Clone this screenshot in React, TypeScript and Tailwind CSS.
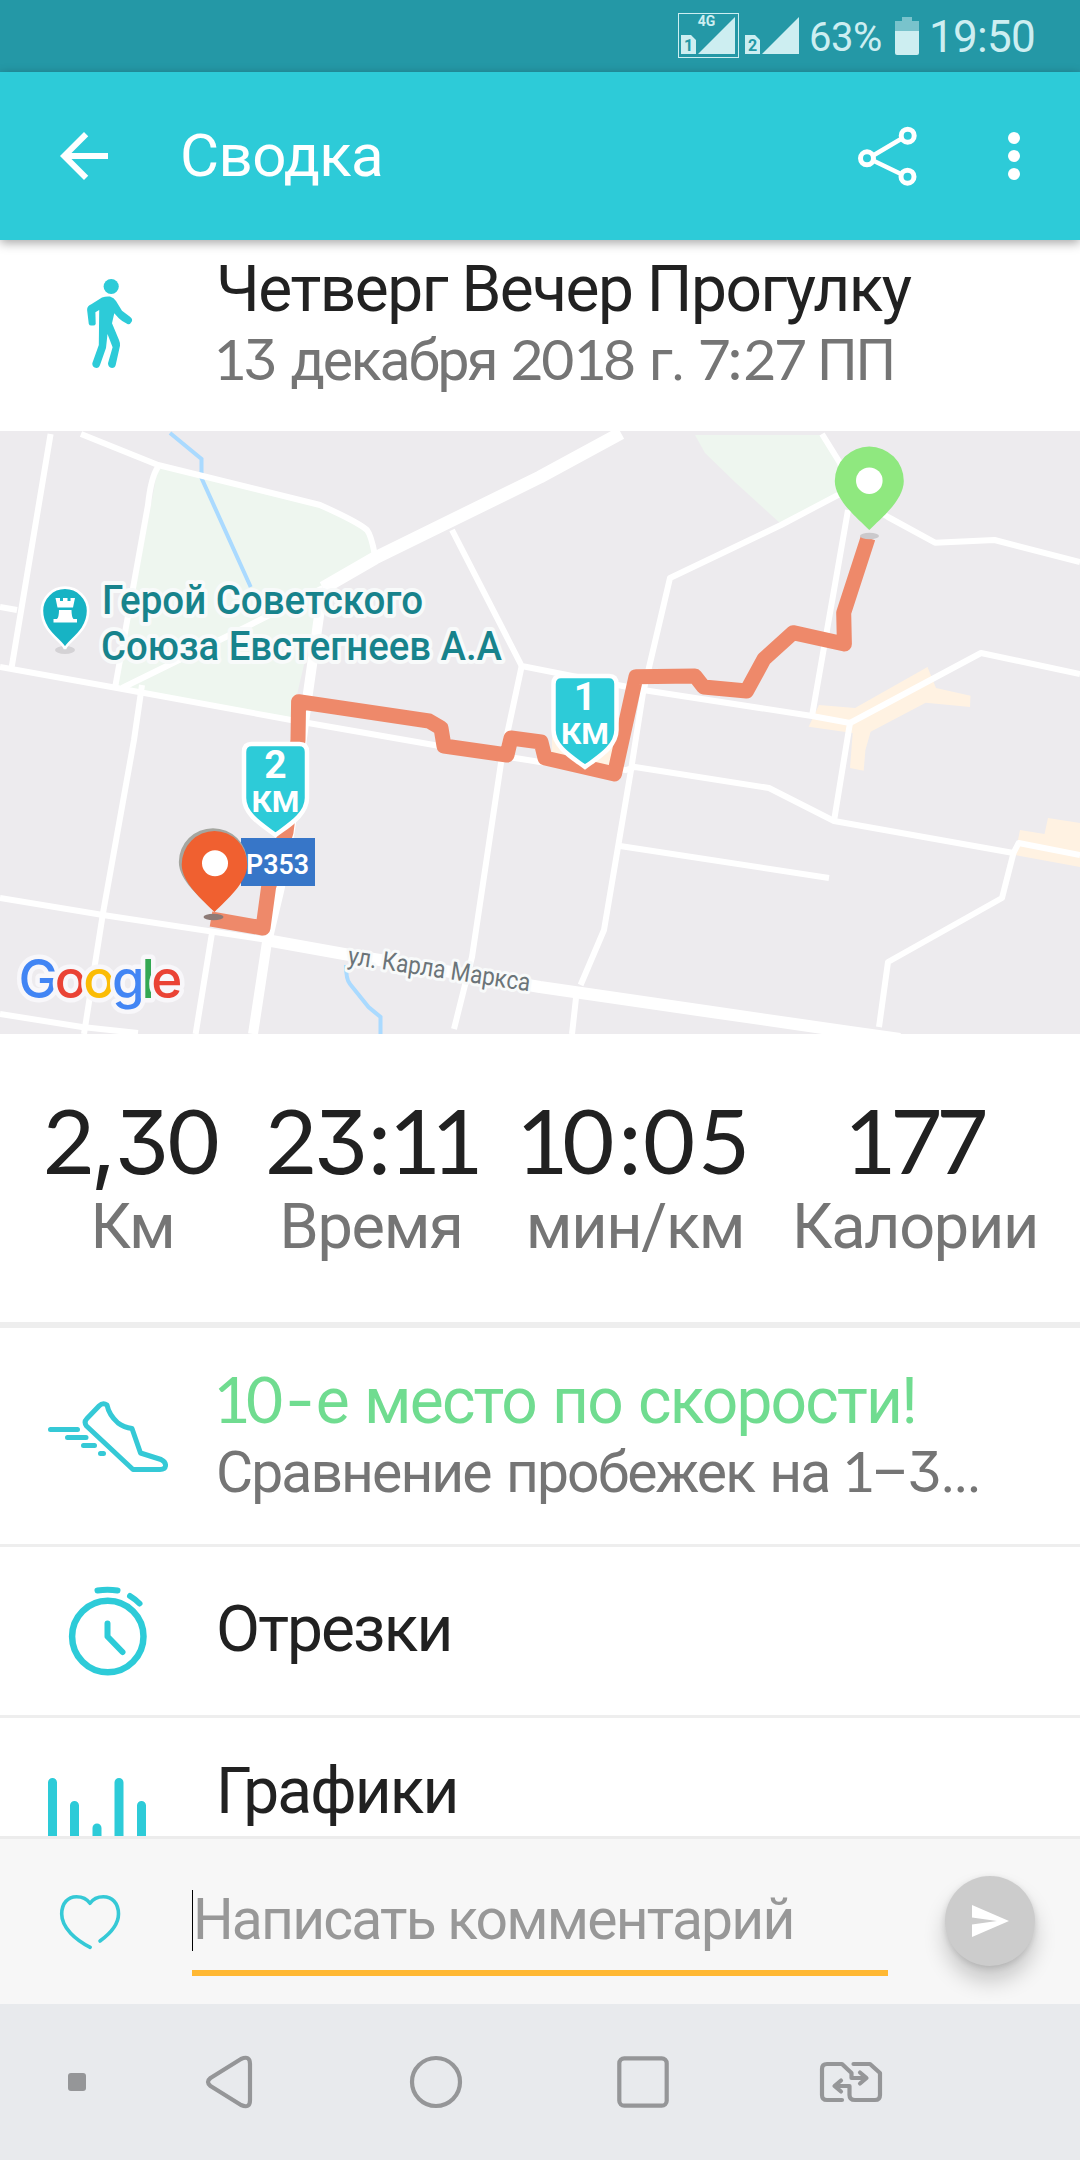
import React from 'react';

interface MixedTextProps {
  text: string;
}

// Digits and some punctuation use a different, tighter face than the Cyrillic letters
const GLYPHS: Record<string, string> = {
  '1': 'font-[Lato] ml-[-0.04em] tracking-[-0.07em]',
  '2': 'font-[Lato] tracking-[-0.04em]',
  '3': "font-[Inter] text-[0.98em] tracking-[-0.02em] [font-feature-settings:'cv09']",
  '0': 'font-[Lato] tracking-[0.03em]',
  '5': 'font-[Lato] tracking-[0em]',
  '7': 'font-[Lato] tracking-[-0.07em]',
  '8': 'font-[Lato] tracking-[-0.02em]',
  ',': 'font-[Inter] ml-[-0.01em] tracking-[-0.02em]',
  ':': 'font-[Inter] tracking-[0em]',
  '-': 'font-[Inter] tracking-[0.02em]',
};

const MixedText: React.FC<MixedTextProps> = ({ text }) => (
  <>
    {text.split(/([\d,:-])/).map((part, i) =>
      GLYPHS[part] ? (
        <span key={i} className={`leading-none ${GLYPHS[part]}`}>
          {part}
        </span>
      ) : (
        <React.Fragment key={i}>{part}</React.Fragment>
      )
    )}
  </>
);

const StatusBar: React.FC = () => (
  <div className="flex h-[72px] shrink-0 items-center bg-[#2498a6] pl-[677px] text-[#cdeef1]">
    <svg width="124" height="72" viewBox="677 0 124 72" className="shrink-0" fill="#cdeef1">
      <rect x="678.5" y="13.5" width="60" height="44" fill="none" stroke="#cdeef1" />
      <text x="706.5" y="26" textAnchor="middle" fontFamily="Roboto" fontWeight="700" fontSize="14">4G</text>
      <path d="M681 35h10l5 5v14h-15zM735 17v37h-37z" />
      <path d="M745 35h10l5 5v14h-15zM799 17v37h-37z" />
      <g fill="#2498a6" fontFamily="Roboto" fontWeight="700" fontSize="16" textAnchor="middle">
        <text x="688.5" y="51">1</text>
        <text x="752.5" y="51">2</text>
      </g>
    </svg>
    <span className="ml-[8px] w-[76px] pt-[3px] text-[40px] tracking-[-0.5px]">63%</span>
    <svg width="24" height="38" viewBox="0 0 24 38" className="ml-[10px]" fill="#cdeef1">
      <path d="M7 0h10v4h7v10H0V4h7z" opacity="0.5" />
      <path d="M0 14h24v22q0 2-2 2H2q-2 0-2-2z" />
    </svg>
    <span className="ml-[10px] pt-[3px] text-[44px] leading-[69px] tracking-[-0.7px]">19:50</span>
  </div>
);

const AppBar: React.FC = () => (
  <header className="relative z-10 flex h-[168px] shrink-0 items-center bg-[#2dcbd8] pl-[48px] text-white shadow-[0_3px_10px_rgba(0,0,0,0.35)]">
    <svg width="72" height="72" viewBox="0 0 24 24" fill="currentColor">
      <path d="M20 11H7.83l5.59-5.59L12 4l-8 8 8 8 1.41-1.41L7.83 13H20z" />
    </svg>
    <h1 className="ml-[60px] w-[660px] text-[60px] leading-[72px] tracking-[-0.6px]">Сводка</h1>
    <svg width="72" height="72" viewBox="852 120 72 72" className="ml-[12px]" fill="none" stroke="currentColor">
      <path d="M874 155L901 139M874 161L901 174" strokeWidth="4.5" />
      <g strokeWidth="5">
        <circle cx="907.7" cy="135.7" r="6.5" />
        <circle cx="867" cy="158.3" r="6.5" />
        <circle cx="907.5" cy="176.7" r="6.5" />
      </g>
    </svg>
    <svg width="12" height="48" viewBox="0 0 12 48" className="ml-[84px]" fill="currentColor">
      <circle cx="6" cy="6" r="6" />
      <circle cx="6" cy="24" r="6" />
      <circle cx="6" cy="42" r="6" />
    </svg>
  </header>
);

const PIN = 'M0 0C-12 -12 -34.5 -30 -34.5 -49A34.5 34.5 0 0 1 34.5 -49C34.5 -30 12 -12 0 0Z';

const KmMarker: React.FC<{ x: number; y: number; km: string }> = ({ x, y, km }) => (
  <g transform={`translate(${x} ${y})`} fontFamily="Roboto" fill="#fff" textAnchor="middle">
    <path
      d="M-24 2H24Q31.5 2 31.5 10V56C31.5 73 12 84 0 93C-12 84 -31.5 73 -31.5 56V10Q-31.5 2 -24 2Z"
      fill="#2dcbd8"
      stroke="#fff"
      strokeWidth="4.5"
    />
    <text y="36" fontSize="39" fontWeight="700">{km}</text>
    <text y="70" fontSize="30" fontWeight="700" textLength="48" lengthAdjust="spacingAndGlyphs">КМ</text>
  </g>
);

const RouteMap: React.FC = () => (
  <svg width="1080" height="603" viewBox="0 431 1080 603" className="block shrink-0 bg-[#edebee]">
    {/* Parks */}
    <g fill="#eef6ef">
      <path d="M158 467L320 505L367 530L375 556L322 588L291 720L117 688Z" />
      <path d="M695 435H822L840 463L836 495L781 524L736 483L705 453Z" />
    </g>
    {/* Built-up areas */}
    <g fill="#fff2e2">
      <path d="M819 705L855 708L927.5 667L936 688L970.5 695.7L970 707L925.7 702.7L870.6 731.7L865.4 750L863.7 770.7L850 768L852.7 733L808.6 726.7Z" />
      <path d="M1020 830L1044.5 834L1048 818L1080 823V867L1015 855Z" />
      <path d="M552 725H632L612 767L552 753Z" />
    </g>
    {/* Water */}
    <g fill="none" stroke="#aadaff" strokeWidth="4">
      <path d="M170 433L201.5 459V478L250.7 587" />
      <path d="M346 965Q346 980 350 984L368.5 1007L380.5 1017V1034" />
    </g>
    {/* Streets */}
    <g fill="none" stroke="#fff" strokeWidth="6" strokeLinejoin="round">
      <path d="M50.6 434L11.7 667M0 607L17 610" />
      <path d="M81 434L158 465L320 505Q358 522 367 530Q371 535 374.7 554" />
      <path d="M158 467Q151 477 148 505L115 688" />
      <path d="M323 588L248 626L179 660L122 688" />
      <path d="M0 667L117 688L291 720L434 745L540 762L626 770L635 767L769 788L834 821L1013.5 853L1018.6 843L1080 855" />
      <path d="M142 685L134 740L103 913L84 1034" />
      <path d="M452 530L521.7 666L643 690L812 716L850 723L981 653L1080 674" />
      <path d="M521.7 666L508 730L501 763L472 957L454 1029" />
      <path d="M822 434L840 463L848 490L838 495L781 525L670 578L643 693L631 770L604 930L580.6 985M576 998L572 1034" />
      <path d="M848 510L812 716M860 500L888 517L935 542.7L994.5 540L1080 562" />
      <path d="M850 723L848 735L834 821M620 846L829 878" />
      <path d="M1013.5 853L1002 898L888 962L879 1027" />
      <path d="M0 898L103 915L268 940M212 933L195.6 1034M0 1014L82 1027L138 1033" />
      <path d="M323 588L375 558L540 477L621 433" strokeWidth="13" />
      <path d="M323 588L307 700L290 830L280 887L267 942L253 1034" strokeWidth="10" />
      <path d="M266 940L344 954L540 987L712 1012L850 1032L900 1039" strokeWidth="12" />
    </g>
    {/* Tracked route */}
    <path
      d="M868 538L843.7 612.7L844.4 644L793 632.7L764 659L746.6 691L703.6 687L695 676L636 676.7L614.5 774L545 758L541 742L511 738L507 755L444 746L441 728L429 721L298.6 701.7L298 740L286 832L268.6 887L263 928L211 919"
      fill="none"
      stroke="#ee896a"
      strokeWidth="15"
      strokeLinejoin="round"
    />
    {/* Landmark */}
    <ellipse cx="65" cy="650" rx="10" ry="4" fill="#d4d2d5" />
    <path d="M0 0C-3 -12 -34.5 -25 -34.5 -57A34.5 34.5 0 0 1 34.5 -57C34.5 -25 3 -12 0 0Z" transform="translate(65 649) scale(0.67)" fill="#17b3c4" stroke="#fff" strokeWidth="4" />
    <path d="M55.5 598h4.5v3h3v-3h4.5v3h3v-3h4.5l-2 9.5h-15.5zM59 610h12.5q0 7 2 9h3.5v3.5h-23.5v-3.5h3.5q2-2 2-9z" fill="#fff" />
    <g fontFamily="Roboto" paintOrder="stroke" stroke="#f8fafa" strokeWidth="8" strokeLinejoin="round">
      <g fill="#17838c" fontSize="41" fontWeight="500">
        <text x="102" y="614" textLength="321" lengthAdjust="spacingAndGlyphs">Герой Советского</text>
        <text x="101" y="660" textLength="401" lengthAdjust="spacingAndGlyphs">Союза Евстегнеев А.А</text>
      </g>
      <text transform="translate(347 964) rotate(8.5)" fontSize="25.5" fill="#6b7478" textLength="184" strokeWidth="6" lengthAdjust="spacingAndGlyphs">
        ул. Карла Маркса
      </text>
    </g>
    {/* Markers */}
    <KmMarker x={585} y={674} km="1" />
    <KmMarker x={275.5} y={742} km="2" />
    <rect x="241" y="838" width="74" height="48" fill="#3776c8" />
    <text x="246" y="873.5" fontFamily="Roboto" fontWeight="600" fontSize="28.5" fill="#fff" textLength="63" lengthAdjust="spacingAndGlyphs">P353</text>
    <ellipse cx="213.5" cy="917" rx="10" ry="3.3" fill="#8d7a76" />
    <path d={PIN} transform="translate(213 910) scale(0.99 0.98)" fill="#a5a6a0" />
    <path d={PIN} transform="translate(214.5 912) scale(0.95 0.97)" fill="#f06030" />
    <circle cx="215" cy="863.3" r="13" fill="#fff" />
    <ellipse cx="869.5" cy="536" rx="9.5" ry="3.3" fill="#cbc9cc" />
    <path d={PIN} transform="translate(869.3 530)" fill="#8fe87f" />
    <circle cx="869.3" cy="480.7" r="13.3" fill="#fff" />
    {/* Attribution */}
    <text x="18.5" y="998" fontFamily="Inter" fontWeight="500" fontSize="53" textLength="164" paintOrder="stroke" stroke="#f8f7fa" strokeWidth="9" strokeLinejoin="round">
      <tspan fill="#4285f4">G</tspan>
      <tspan fill="#ea4335">o</tspan>
      <tspan fill="#fbbc05">o</tspan>
      <tspan fill="#4285f4">g</tspan>
      <tspan fill="#34a853">l</tspan>
      <tspan fill="#ea4335">e</tspan>
    </text>
  </svg>
);

const stats = [
  { value: '2,30', label: 'Км', width: 'w-[173px]' },
  { value: '23:11', label: 'Время', width: 'w-[208px]' },
  { value: '10:05', label: 'мин/км', width: 'w-[224px]' },
  { value: '177', label: 'Калории', width: 'w-[240px]' },
];

const Stats: React.FC = () => (
  <section className="flex h-[294px] shrink-0 gap-[48px] border-b-[6px] border-[#eeeeee] pt-[60px] pl-[46px]">
    {stats.map((s) => (
      <div key={s.label} className={`flex flex-col items-center whitespace-nowrap ${s.width}`}>
        <span className="h-[96px] text-[90px] leading-[100px] text-[#212121]">
          <MixedText text={s.value} />
        </span>
        <span className="text-[63px] leading-[74px] tracking-[-1.3px] text-[#757575]">{s.label}</span>
      </div>
    ))}
  </section>
);

const WalkIcon: React.FC = () => (
  <svg width="120" height="120" viewBox="0 0 120 120" className="mt-[30px]" fill="#2dcbd8">
    <circle cx="63.2" cy="16.5" r="7.6" />
    <path d="M43.3 34.3L54 27.5Q58 26 62 26.5Q66 27.5 68 31L74 40.7L82 46.7Q85 49 83.8 51.5Q82 55 79.4 54Q74 51.5 70.8 48.3L66.3 43.3L64 53.3L71 70Q72.3 73 72 75.7L67.7 95Q67 98 64 98Q60 97.5 60 93.3L64.6 77.3L59.5 64L58 78L52 95Q51 98 48.5 98Q44 97.5 44.3 93.3L50.8 75L51.2 40L47.4 42.3L47.7 54Q47 56 44.2 55.5Q41.5 56 40.8 54L39.1 40Q39 36 43.3 34.3Z" />
  </svg>
);

const ShoeIcon: React.FC = () => (
  <svg width="120" height="120" viewBox="0 0 120 120" className="mt-[48px]" fill="none" stroke="#35c9d6" strokeWidth="5" strokeLinecap="round" strokeLinejoin="round">
    <path d="M2.5 53.5H29.5M19.5 61.5H38M35.5 69.5H46.5M52.5 77.5H55.5" />
    <path d="M38.5 50Q35.5 46 39 42.5L51 30Q55 26 59 29Q61 39 70 47Q76 51.5 84 52.5L92.5 77L113 83.5Q118 86 117.5 90Q117 93.5 112 93.5H85Z" />
  </svg>
);

const StopwatchIcon: React.FC = () => (
  <svg width="120" height="120" viewBox="0 0 120 120" className="mt-[24px]" fill="none" stroke="#2dcbd8" strokeWidth="6.5" strokeLinecap="round" strokeLinejoin="round">
    <circle cx="59.8" cy="65.5" r="35.7" />
    <path d="M49.5 19.5Q59.5 18 69.5 19.5M82 25Q87 28 91.5 32.5M59.5 52.5V65.5L74.5 81" strokeWidth="6" />
  </svg>
);

const ChartIcon: React.FC = () => (
  <svg width="120" height="120" viewBox="0 0 120 120" className="mt-[60px]" stroke="#2dcbd8" strokeWidth="9" strokeLinecap="round">
    <path d="M4.5 4.5V100M26.5 27.5V100M49 50V100M71 4.5V100M93.5 27.5V100" />
  </svg>
);

const CommentBar: React.FC = () => (
  <div className="flex h-[168px] shrink-0 items-start overflow-hidden border-t-[3px] border-[#ececec] bg-[#f7f7f7] pl-[54px]">
    <svg width="72" height="72" viewBox="0 0 72 72" className="mt-[46px]" fill="none" stroke="#35c9d6" strokeWidth="3.6" strokeLinecap="round" strokeLinejoin="round">
      <path d="M36.2 62.3C22 55 7.7 43 7.7 29C7.7 18 14 11.7 22.5 11.7C29 11.7 33 14 36 18.3C39 14 43 11.7 49.3 11.7C58 11.7 64.5 18 64.5 29C64.5 39 57 48 46 56" />
    </svg>
    <div className="mt-[51px] ml-[66px] flex h-[86px] w-[696px] items-start border-b-[6px] border-[#ffb833]">
      <span className="h-[61px] w-px bg-black" />
      <span className="text-[57px] leading-[60px] tracking-[-1.8px] whitespace-nowrap text-[#989898]">Написать комментарий</span>
    </div>
    <button className="mt-[37px] ml-[57px] flex h-[90px] w-[90px] items-center justify-center rounded-full bg-[#cccccc] shadow-[0_15px_22px_rgba(0,0,0,0.2),0_2px_6px_rgba(0,0,0,0.12)]">
      <svg width="38" height="34" viewBox="0 0 38 34" fill="#fff">
        <path d="M1 1L38 17L1 33V20.5L26 17L1 13.5Z" />
      </svg>
    </button>
  </div>
);

const NavBar: React.FC = () => (
  <nav className="flex h-[156px] shrink-0 items-center bg-[#e8eaed] pl-[68px]">
    <span className="h-[18px] w-[18px] rounded-[3px] bg-[#959698]" />
    <svg width="60" height="60" viewBox="0 0 60 60" className="ml-[114px]" fill="none" stroke="#959698" strokeWidth="4.2" strokeLinejoin="round">
      <path d="M10.5 26L41 7Q50 3 50 12V48Q50 57 41 53L10.5 34Q5.5 30 10.5 26Z" />
    </svg>
    <svg width="60" height="60" viewBox="0 0 60 60" className="ml-[146px]" fill="none" stroke="#959698" strokeWidth="4.2">
      <circle cx="30" cy="30" r="24" />
    </svg>
    <svg width="60" height="60" viewBox="0 0 60 60" className="ml-[147px]" fill="none" stroke="#959698" strokeWidth="4.2">
      <rect x="6.3" y="6.3" width="47.4" height="47.4" rx="5" />
    </svg>
    <svg width="68" height="60" viewBox="0 0 68 60" className="ml-[144px]" fill="none" stroke="#959698" strokeWidth="4.2" strokeLinecap="round" strokeLinejoin="round">
      <path d="M25 48H10Q5 48 5 43V17Q5 12 10 12H25L34.5 21V26H49M43 20.5L49.5 26L43 31.5" />
      <path d="M36.5 12H53L63 21V43Q63 48 58 48H38Q32.5 48 32.5 43V34H18M24 28.5L17.5 34L24 39.5" />
    </svg>
  </nav>
);

export default function App() {
  return (
    <div className="flex h-[2160px] w-[1080px] flex-col overflow-hidden bg-white font-[Roboto,sans-serif]">
      <StatusBar />
      <AppBar />

      <section className="flex h-[191px] shrink-0 gap-[48px] pl-[48px]">
        <WalkIcon />
        <div className="pt-[14px] whitespace-nowrap">
          <h2 className="text-[64px] leading-[72px] tracking-[-1.5px] text-[#212121]">Четверг Вечер Прогулку</h2>
          <p className="h-[70px] text-[57px] leading-[69px] tracking-[-2.1px] text-[#757575] [word-spacing:2px]">
            <MixedText text="13 декабря 2018 г. 7:27 ПП" />
          </p>
        </div>
      </section>

      <RouteMap />
      <Stats />

      <section className="flex h-[219px] shrink-0 gap-[48px] border-b-[3px] border-[#eeeeee] pl-[48px]">
        <ShoeIcon />
        <div className="pt-[38px] whitespace-nowrap">
          <p className="h-[72px] text-[64px] leading-[72px] tracking-[-1.8px] text-[#70dc90] [word-spacing:2px]">
            <MixedText text="10-е место по скорости!" />
          </p>
          <p className="h-[70px] text-[57px] leading-[70px] tracking-[-1.9px] text-[#757575] [word-spacing:3px]">
            <MixedText text="Сравнение пробежек на 1–3..." />
          </p>
        </div>
      </section>

      <section className="flex h-[171px] shrink-0 gap-[48px] border-b-[3px] border-[#eeeeee] pl-[48px]">
        <StopwatchIcon />
        <p className="pt-[47px] text-[64px] leading-[72px] tracking-[-1.9px] text-[#212121]">Отрезки</p>
      </section>

      <section className="flex h-[118px] shrink-0 gap-[48px] overflow-hidden pl-[48px]">
        <ChartIcon />
        <p className="pt-[38px] text-[64px] leading-[72px] tracking-[-1.9px] text-[#212121]">Графики</p>
      </section>

      <CommentBar />
      <NavBar />
    </div>
  );
}
